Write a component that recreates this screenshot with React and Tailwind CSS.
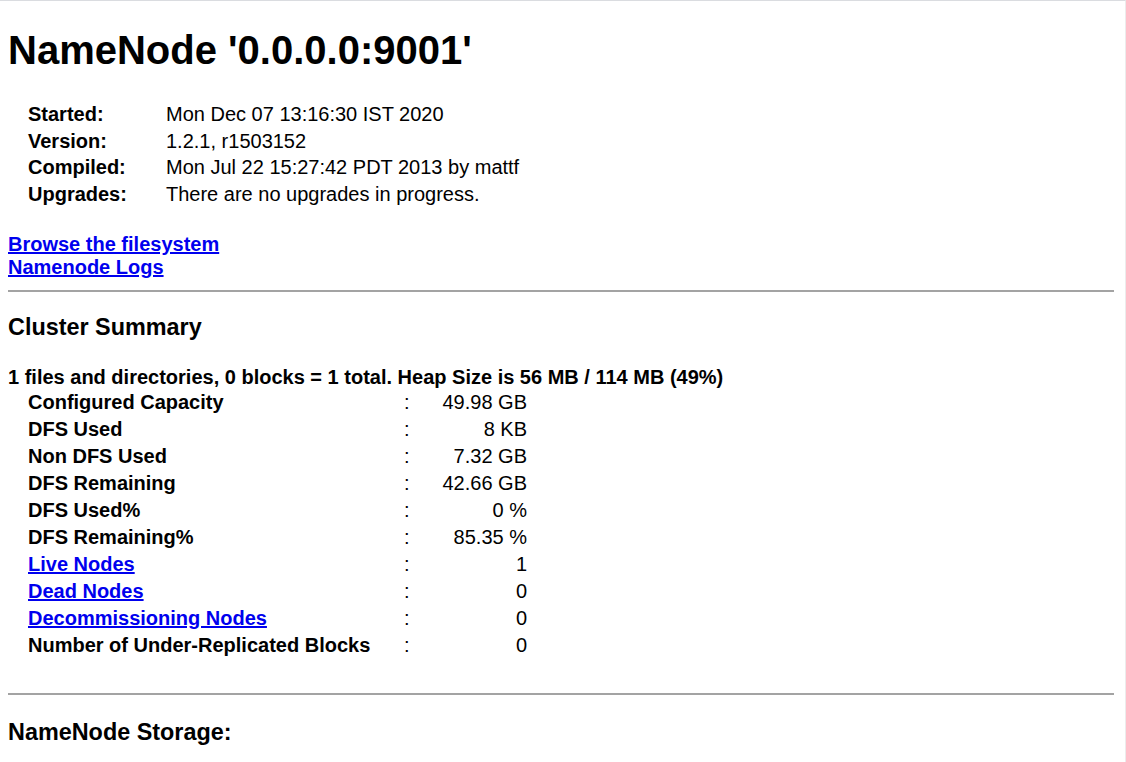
import React from 'react';

const info = [
  ['Started:', 'Mon Dec 07 13:16:30 IST 2020'],
  ['Version:', '1.2.1, r1503152'],
  ['Compiled:', 'Mon Jul 22 15:27:42 PDT 2013 by mattf'],
  ['Upgrades:', 'There are no upgrades in progress.'],
];

const summary = [
  { label: 'Configured Capacity', value: '49.98 GB' },
  { label: 'DFS Used', value: '8 KB' },
  { label: 'Non DFS Used', value: '7.32 GB' },
  { label: 'DFS Remaining', value: '42.66 GB' },
  { label: 'DFS Used%', value: '0 %' },
  { label: 'DFS Remaining%', value: '85.35 %' },
  { label: 'Live Nodes', value: '1', link: true },
  { label: 'Dead Nodes', value: '0', link: true },
  { label: 'Decommissioning Nodes', value: '0', link: true },
  { label: 'Number of Under-Replicated Blocks', value: '0' },
];

const Rule = ({ className }) => (
  <div className={`h-[2px] bg-[#a3a3a3] ${className}`} />
);

const App = () => {
  return (
    <div
      className="w-[1126px] min-h-[762px] bg-white text-black border-t border-[#dadce0] border-r-[1px] border-r-[#ececec] pl-2 pr-[11px]"
      style={{ fontFamily: '"Liberation Sans", Arial, sans-serif' }}
    >
      <h1 className="mt-[26px] text-[40px] leading-[46px] font-bold">NameNode '0.0.0.0:9001'</h1>

      <div className="mt-[28px] ml-[20px] grid grid-cols-[138px_auto] text-[20px] leading-[26.7px]">
        {info.map(([k, v]) => (
          <React.Fragment key={k}>
            <div className="font-bold">{k}</div>
            <div>{v}</div>
          </React.Fragment>
        ))}
      </div>

      <div className="mt-[25px] flex flex-col items-start text-[20px] leading-[23px] font-bold">
        <a href="#" className="text-[#0000ee] underline">Browse the filesystem</a>
        <a href="#" className="text-[#0000ee] underline">Namenode Logs</a>
      </div>

      <Rule className="mt-[11px]" />

      <h3 className="mt-[22px] text-[23.4px] leading-[27px] font-bold">Cluster Summary</h3>

      <div className="mt-[25px] text-[20px] leading-[23px] font-bold">
        1 files and directories, 0 blocks = 1 total. Heap Size is 56 MB / 114 MB (49%)
      </div>

      <div className="ml-[20px] grid grid-cols-[376px_20px_103px] text-[20px] leading-[27px]">
        {summary.map((r) => (
          <React.Fragment key={r.label}>
            <div className="font-bold">
              {r.link ? (
                <a href="#" className="text-[#0000ee] underline">{r.label}</a>
              ) : (
                r.label
              )}
            </div>
            <div>:</div>
            <div className="text-right">{r.value}</div>
          </React.Fragment>
        ))}
      </div>

      <Rule className="mt-[34px]" />

      <h3 className="mt-[24px] text-[23.4px] leading-[27px] font-bold">NameNode Storage:</h3>
    </div>
  );
};

export default App;
